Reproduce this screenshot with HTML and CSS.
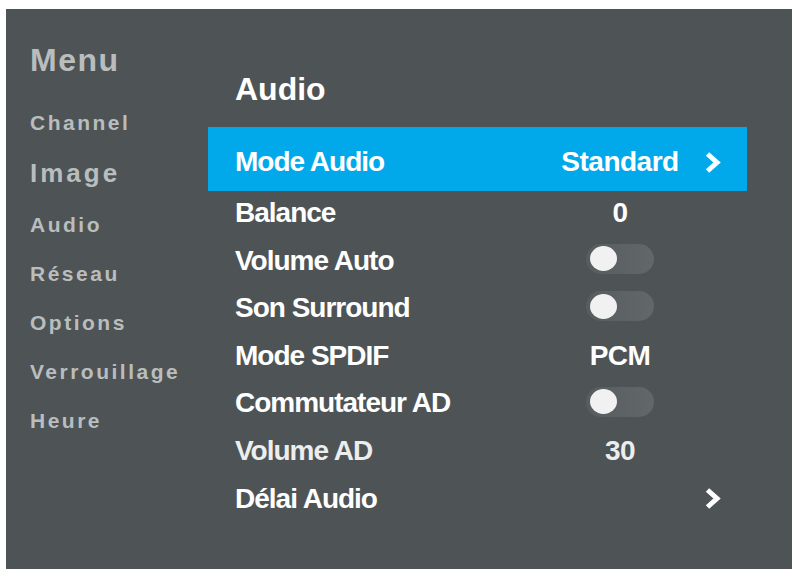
FILE: index.html
```html
<!DOCTYPE html>
<html lang="fr">
<head>
  <meta charset="UTF-8" />
  <meta name="viewport" content="width=device-width, initial-scale=1.0"/>
  <title>Menu Audio</title>
  <link rel="stylesheet" href="styles.css">
</head>
<body>

  <div class="osd">
    <nav class="sidebar">
      <div class="sidebar-title">Menu</div>
      <div class="nav-item">Channel</div>
      <div class="nav-item big">Image</div>
      <div class="nav-item">Audio</div>
      <div class="nav-item">Réseau</div>
      <div class="nav-item">Options</div>
      <div class="nav-item">Verrouillage</div>
      <div class="nav-item">Heure</div>
    </nav>

    <main class="content">
      <h1 class="page-title">Audio</h1>

      <div class="row selected">
        <span class="label">Mode Audio</span>
        <span class="value">Standard</span>
        <span class="arrow">
          <svg width="18" height="21" viewBox="0 0 18 21"><path d="M3.5 2 L13 10.5 L3.5 19" fill="none" stroke="#fff" stroke-width="5"/></svg>
        </span>
      </div>

      <div class="row">
        <span class="label">Balance</span>
        <span class="value">0</span>
      </div>

      <div class="row">
        <span class="label">Volume Auto</span>
        <span class="value"><span class="toggle"><span class="knob"></span></span></span>
      </div>

      <div class="row">
        <span class="label">Son Surround</span>
        <span class="value"><span class="toggle"><span class="knob"></span></span></span>
      </div>

      <div class="row">
        <span class="label">Mode SPDIF</span>
        <span class="value">PCM</span>
      </div>

      <div class="row">
        <span class="label">Commutateur AD</span>
        <span class="value"><span class="toggle"><span class="knob"></span></span></span>
      </div>

      <div class="row dim">
        <span class="label">Volume AD</span>
        <span class="value">30</span>
      </div>

      <div class="row">
        <span class="label">Délai Audio</span>
        <span class="value"></span>
        <span class="arrow">
          <svg width="18" height="21" viewBox="0 0 18 21"><path d="M3.5 2 L13 10.5 L3.5 19" fill="none" stroke="#fff" stroke-width="5"/></svg>
        </span>
      </div>
    </main>
  </div>

</body>
</html>
```

FILE: styles.css
```css
* {
  box-sizing: border-box;
}

body {
  margin: 0;
  background-color: #fff;
  font-family: "Liberation Sans", Arial, sans-serif;
  font-weight: bold;
}

.osd {
  display: flex;
  width: 786px;
  height: 560px;
  margin: 9px 6px 7px;
  background-color: #4e5456;
}

.sidebar {
  width: 202px;
  padding: 26px 0 0 24px;
  color: #b9bdbe;
}

.sidebar-title {
  font-size: 32px;
  line-height: 50px;
  letter-spacing: 1.5px;
  margin-bottom: 13px;
}

.nav-item {
  font-size: 21px;
  line-height: 49px;
  letter-spacing: 2.5px;
}

.nav-item.big {
  font-size: 26px;
  line-height: 53px;
  letter-spacing: 3px;
}

.content {
  width: 539px;
  padding-top: 50px;
  color: #fff;
}

.page-title {
  margin: 0 0 8px;
  padding-left: 27px;
  font-size: 32px;
  line-height: 60px;
}

.row {
  display: grid;
  grid-template-columns: 320px 130px 62px;
  align-items: center;
  height: 47.6px;
  padding-left: 27px;
  font-size: 28px;
  line-height: 47.6px;
  letter-spacing: -1px;
}

.row.selected {
  height: 64px;
  padding-top: 6px;
  line-height: 58px;
  margin-bottom: -2px;
  background-color: #02a9ea;
}

.row.dim {
  color: #eceded;
}

.value {
  display: flex;
  justify-content: center;
  letter-spacing: -0.5px;
}

.arrow {
  display: flex;
  padding-left: 19px;
}

.toggle {
  display: flex;
  align-items: center;
  width: 68px;
  height: 30px;
  padding-left: 4px;
  margin-top: -3px;
  border-radius: 15px;
  background: linear-gradient(to right, #575d5f, #62686a);
}

.knob {
  width: 27px;
  height: 25px;
  border-radius: 50%;
  background-color: #f1f1f1;
}
```
